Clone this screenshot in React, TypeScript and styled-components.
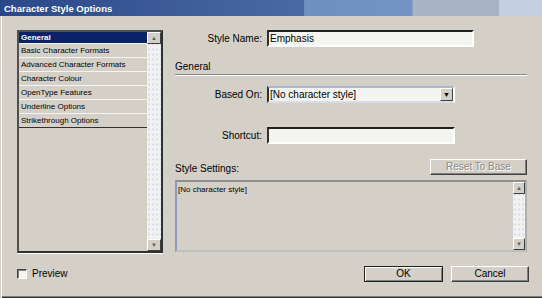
import React from "react";
import styled, { createGlobalStyle } from "styled-components";

const GlobalStyle = createGlobalStyle`
  html, body { margin: 0; padding: 0; background: #d4d0c8; }
  body { font-family: "Liberation Sans", Arial, sans-serif; color: #000; }
  * { box-sizing: border-box; }
`;

const Window = styled.div`
  width: 542px;
  height: 298px;
  background: #d4d0c8;
  display: flex;
  flex-direction: column;
  overflow: hidden;
  box-shadow: inset 1px 0 0 #d4d0c8, inset 2px 0 0 #ffffff, inset 0 -1px 0 #303030, inset 0 -2px 0 #808080;
`;

const TitleBar = styled.div`
  height: 16px;
  flex: none;
  display: flex;
  align-items: center;
  padding-left: 4px;
  color: #ffffff;
  font-size: 9.5px;
  font-weight: bold;
  background: linear-gradient(to right, #2a4888 0%, #4a6aa4 56%, #6e90c0 56.2%, #7294c2 76%, #a8b4c4 76.2%, #a8b4c4 92%, #c4d0e2 92.2%, #c4d0e2 100%);
`;

const Body = styled.div`
  display: flex;
  gap: 12px;
  padding: 14px 15px 0 17px;
`;

const List = styled.div`
  width: 146px;
  height: 223px;
  display: flex;
  border: 2px solid;
  border-color: #505050 #303030 #303030 #505050;
  box-shadow: 0 1px 0 #ffffff;
`;

const Items = styled.div`
  flex: 1;
  display: flex;
  flex-direction: column;
`;

const Item = styled.div<{ $selected?: boolean; $last?: boolean }>`
  height: ${(p) => (p.$selected ? 12 : 14)}px;
  line-height: ${(p) => (p.$selected ? 11 : 13)}px;
  padding-left: 2px;
  font-size: 8px;
  white-space: nowrap;
  font-weight: ${(p) => (p.$selected ? "bold" : "normal")};
  color: ${(p) => (p.$selected ? "#ffffff" : "#000000")};
  background: ${(p) => (p.$selected ? "#0c2266" : "transparent")};
  border-bottom: 1px solid ${(p) => (p.$last ? "#303030" : "#f4f4f2")};
`;

const ScrollBar = styled.div`
  width: 14px;
  display: flex;
  flex-direction: column;
  background-color: #f2f2f0;
  background-image: radial-gradient(circle, #d6deec 1px, transparent 1.2px);
  background-size: 4px 5px;
`;

const Track = styled.div`
  flex: 1;
`;

const ArrowButton = styled.div`
  height: 12px;
  width: 14px;
  background: #d4d0c8;
  border: 1px solid;
  border-color: #ffffff #404040 #404040 #ffffff;
  display: flex;
  align-items: center;
  justify-content: center;
  font-size: 6px;
  color: #606060;
  line-height: 1;
`;

const Panel = styled.div`
  flex: 1;
  display: flex;
  flex-direction: column;
`;

const FieldRow = styled.div<{ $top: number }>`
  display: grid;
  grid-template-columns: 87px auto;
  column-gap: 5px;
  align-items: center;
  margin-top: ${(p) => p.$top}px;
`;

const Label = styled.label`
  text-align: right;
  font-size: 10px;
  color: #000;
`;

const TextBox = styled.div<{ $width: number }>`
  width: ${(p) => p.$width}px;
  height: 17px;
  background: #f4f4f0;
  border: 2px solid;
  border-color: #202020 #ffffff #ffffff #303030;
  font-size: 10px;
  line-height: 13px;
  padding-left: 1px;
`;

const Combo = styled.div`
  width: 188px;
  height: 17px;
  display: flex;
  background: #f4f4f0;
  border: 2px solid;
  border-color: #a8b8d0 #ffffff #d8dce4 #303030;
`;

const ComboText = styled.div`
  flex: 1;
  font-size: 10px;
  line-height: 13px;
  padding-left: 1px;
`;

const ComboButton = styled.div`
  width: 13px;
  background: #d4d0c8;
  border: 1px solid;
  border-color: #ffffff #404040 #404040 #ffffff;
  display: flex;
  align-items: center;
  justify-content: center;
  font-size: 7px;
  line-height: 1;
`;

const SectionTitle = styled.div`
  margin-top: 14px;
  font-size: 10px;
  padding-bottom: 2px;
  border-bottom: 1px solid #888888;
  box-shadow: 0 1px 0 #ffffff;
`;

const SettingsHeader = styled.div`
  margin-top: 15px;
  display: flex;
  align-items: flex-end;
  justify-content: space-between;
`;

const Caption = styled.div`
  font-size: 10px;
  padding-bottom: 1px;
`;

const Button = styled.button<{ $width: number; $default?: boolean; $disabled?: boolean }>`
  width: ${(p) => p.$width}px;
  height: 16px;
  padding: 0;
  font-family: "Liberation Sans", Arial, sans-serif;
  font-size: 10px;
  line-height: 12px;
  background: #d4d0c8;
  color: ${(p) => (p.$disabled ? "#8a8a8a" : "#000000")};
  text-shadow: ${(p) => (p.$disabled ? "1px 1px 0 #ffffff" : "none")};
  border: 1px solid;
  border-color: ${(p) => (p.$default ? "#202020" : "#ffffff #404040 #404040 #ffffff")};
  box-shadow: ${(p) =>
    p.$default ? "inset 1px 1px 0 #ffffff, inset -1px -1px 0 #808080" : "inset -1px -1px 0 #808080"};
`;

const SettingsBox = styled.div`
  margin-top: 5px;
  height: 72px;
  display: flex;
  border: 2px solid;
  border-color: #909090 #b0b0b0 #c0c0c0 #8c9cb8;
`;

const SettingsText = styled.div`
  flex: 1;
  font-size: 8px;
  padding: 3px 0 0 1px;
`;

const SmallScroll = styled(ScrollBar)`
  width: 12px;
`;

const SmallArrow = styled(ArrowButton)`
  width: 12px;
`;

const Footer = styled.div`
  flex: 1;
  display: flex;
  align-items: center;
  justify-content: space-between;
  padding: 0 13px 4px 17px;
`;

const Check = styled.label`
  display: flex;
  align-items: center;
  gap: 5px;
  font-size: 10px;
`;

const CheckBox = styled.span`
  width: 10px;
  height: 10px;
  background: #f4f4f0;
  border: 1px solid;
  border-color: #404040 #ffffff #ffffff #404040;
  box-shadow: inset 1px 1px 0 #808080;
`;

const Buttons = styled.div`
  display: flex;
  gap: 8px;
`;

const items = [
  "Basic Character Formats",
  "Advanced Character Formats",
  "Character Colour",
  "OpenType Features",
  "Underline Options",
  "Strikethrough Options",
];

export default function App() {
  return (
    <>
      <GlobalStyle />
      <Window>
        <TitleBar>Character Style Options</TitleBar>
        <Body>
          <List>
            <Items>
              <Item $selected>General</Item>
              {items.map((t, i) => (
                <Item key={t} $last={i === items.length - 1}>
                  {t}
                </Item>
              ))}
            </Items>
            <ScrollBar>
              <ArrowButton>▲</ArrowButton>
              <Track />
              <ArrowButton>▼</ArrowButton>
            </ScrollBar>
          </List>
          <Panel>
            <FieldRow $top={0}>
              <Label>Style Name:</Label>
              <TextBox $width={207}>Emphasis</TextBox>
            </FieldRow>
            <SectionTitle>General</SectionTitle>
            <FieldRow $top={11}>
              <Label>Based On:</Label>
              <Combo>
                <ComboText>[No character style]</ComboText>
                <ComboButton>▼</ComboButton>
              </Combo>
            </FieldRow>
            <FieldRow $top={24}>
              <Label>Shortcut:</Label>
              <TextBox $width={188} />
            </FieldRow>
            <SettingsHeader>
              <Caption>Style Settings:</Caption>
              <Button $width={97} $disabled>
                Reset To Base
              </Button>
            </SettingsHeader>
            <SettingsBox>
              <SettingsText>[No character style]</SettingsText>
              <SmallScroll>
                <SmallArrow>▲</SmallArrow>
                <Track />
                <SmallArrow>▼</SmallArrow>
              </SmallScroll>
            </SettingsBox>
          </Panel>
        </Body>
        <Footer>
          <Check>
            <CheckBox />
            Preview
          </Check>
          <Buttons>
            <Button $width={79} $default>
              OK
            </Button>
            <Button $width={78}>Cancel</Button>
          </Buttons>
        </Footer>
      </Window>
    </>
  );
}
